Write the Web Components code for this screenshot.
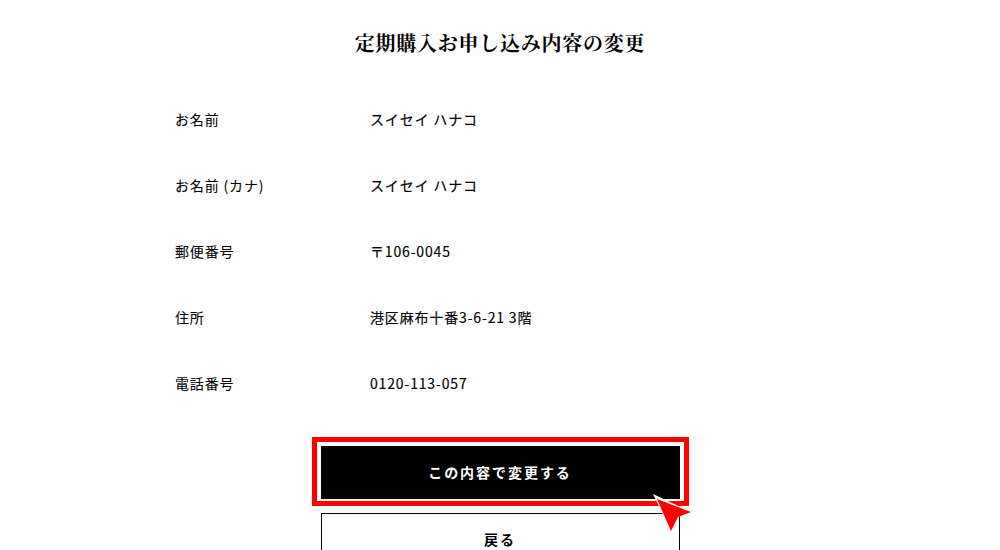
<!DOCTYPE html>
<html lang="ja"><head><meta charset="utf-8">
<style>
html,body{margin:0;padding:0;background:#fff;height:550px;overflow:hidden}
</style></head>
<body>
<change-page>
  <page-title slot="title">定期購入お申し込み内容の変更</page-title>
  <info-row label="お名前">スイセイ ハナコ</info-row>
  <info-row label="お名前 (カナ)">スイセイ ハナコ</info-row>
  <info-row label="郵便番号">〒106-0045</info-row>
  <info-row label="住所">港区麻布十番3-6-21 3階</info-row>
  <info-row label="電話番号">0120-113-057</info-row>
  <action-button slot="actions" variant="primary" highlighted>この内容で変更する</action-button>
  <action-button slot="actions">戻る</action-button>
</change-page>
<script>
const SANS='"Noto Sans CJK JP","Noto Sans",sans-serif';
customElements.define('change-page',class extends HTMLElement{
  constructor(){super();this.attachShadow({mode:'open'}).innerHTML=`<style>
:host{display:block;width:1000px;height:550px;overflow:hidden;position:relative;color:#000;font-family:${SANS}}
.wrap{display:flex;flex-direction:column;padding-top:31px}
.rows{display:flex;flex-direction:column;padding:52px 175px 0;gap:47px}
.actions{display:flex;flex-direction:column;align-items:center;gap:14px;margin-top:53px;flex:none}
</style>
<div class="wrap"><slot name="title"></slot><div class="rows"><slot></slot></div><div class="actions"><slot name="actions"></slot></div></div>`;}
});
customElements.define('page-title',class extends HTMLElement{
  constructor(){super();this.attachShadow({mode:'open'}).innerHTML=`<style>
:host{display:block;text-align:center;font:700 20px/27px "Liberation Serif","Noto Serif CJK JP",serif;color:#000;letter-spacing:.0375em}
</style><slot></slot>`;}
});
customElements.define('info-row',class extends HTMLElement{
  constructor(){super();const r=this.attachShadow({mode:'open'});
  r.innerHTML=`<style>
:host{display:grid;grid-template-columns:195px 1fr;font:400 14px/19px ${SANS};letter-spacing:.06em;color:#000}
.l{-webkit-text-stroke:.08px #000}
.v{-webkit-text-stroke:.15px #000}
</style><div class="l"></div><div class="v"><slot></slot></div>`;
  r.querySelector('.l').textContent=this.getAttribute('label');}
});
customElements.define('action-button',class extends HTMLElement{
  constructor(){super();const r=this.attachShadow({mode:'open'});
  r.innerHTML=`<style>
:host{display:flex;position:relative;flex:none;box-sizing:border-box;width:359px;height:53px;padding-bottom:2px;align-items:center;justify-content:center;font:700 14px/1 ${SANS};letter-spacing:.14em;border:1px solid #000;background:#fff;color:#000}
:host([variant=primary]){background:#000;color:#fff;z-index:1}
.hl{position:absolute;inset:-10px -10px -8px -10px;border:5px solid #f00;pointer-events:none}
svg{position:absolute;left:330px;top:47px;overflow:visible}
</style><slot></slot>`+(this.hasAttribute('highlighted')?`<div class="hl"></div>
<svg width="40" height="38" viewBox="0 0 40 38"><path d="M1 0 39 18 26 23 19 37Z" fill="#fff"/><path d="M5 5 39 18 26 23 19 37Z" fill="#f00"/></svg>`:'');}
});
</script>
</body></html>
